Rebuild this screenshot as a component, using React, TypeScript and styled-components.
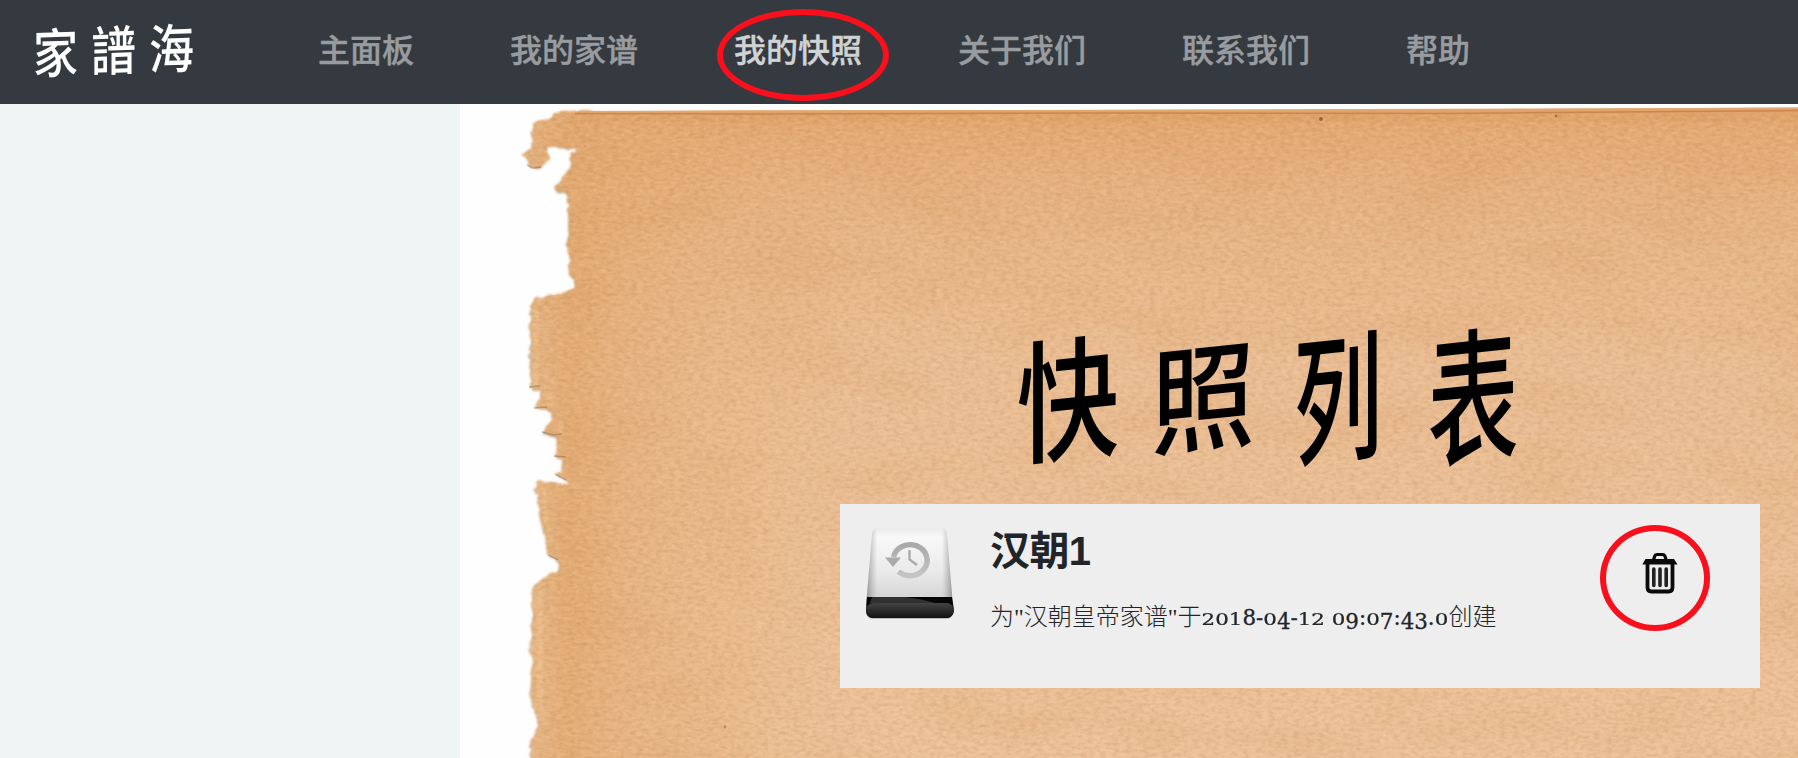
import React from "react";
import styled, { createGlobalStyle, css } from "styled-components";

const GlobalStyle = createGlobalStyle`
  *, *::before, *::after { box-sizing: border-box; }
  html, body, #root { height: 100%; }
  body {
    margin: 0;
    overflow: hidden;
    background: #fff;
    color: #212529;
    font-family: "Liberation Sans", "Noto Sans CJK SC", sans-serif;
  }
`;

const Page = styled.div`
  display: flex;
  flex-direction: column;
  height: 758px;
`;

const NavBar = styled.header`
  display: flex;
  align-items: center;
  flex: none;
  height: 104px;
  padding: 0 0 8px 33px;
  background: #343a40;
`;

const Logo = styled.div`
  width: 285px;
  font-family: "Noto Sans CJK TC", sans-serif;
  font-size: 45px;
  line-height: 60px;
  font-weight: 500;
  letter-spacing: 13px;
  color: #fff;
  white-space: nowrap;
  transform: translateY(-2px) skewY(-2deg) scaleY(1.18);
`;

const NavLinks = styled.nav`
  display: flex;
  gap: 96px;
`;

const NavLink = styled.a<{ $active?: boolean }>`
  position: relative;
  font-family: "Noto Sans CJK SC", sans-serif;
  font-size: 32px;
  line-height: 48px;
  font-weight: 500;
  white-space: nowrap;
  -webkit-text-stroke: 0.4px currentColor;
  color: ${(p) => (p.$active ? "#d0d2d3" : "#999c9f")};
`;

const Ring = styled.span<{ $w: number; $h: number; $x: number; $y: number }>`
  position: absolute;
  left: ${(p) => p.$x}px;
  top: ${(p) => p.$y}px;
  width: ${(p) => p.$w}px;
  height: ${(p) => p.$h}px;
  border: 6px solid #fa0f1c;
  border-radius: 50%;
`;

const Body = styled.div`
  display: flex;
  flex: 1;
  min-height: 0;
`;

const SideBar = styled.aside`
  flex: none;
  width: 460px;
  background: #eff4f5;
`;

const Scroll = styled.main`
  position: relative;
  flex: 1;
  overflow: hidden;
  padding: 212px 0 0 380px;
`;

const PaperArt = styled.svg`
  position: absolute;
  inset: 0;
  width: 1338px;
  height: 654px;
`;

const Title = styled.h1`
  position: relative;
  display: flex;
  gap: 29px;
  height: 150px;
  margin: 0 0 38px 175px;
  font-family: "Noto Sans CJK SC", sans-serif;
  font-size: 106px;
  line-height: 150px;
  font-weight: 500;
  color: #000;
`;

const Stroke = styled.span<{ $sx: number; $sy: number; $dy: number }>`
  transform: translateY(${(p) => p.$dy}px) skewY(-6deg) scale(${(p) => p.$sx}, ${(p) => p.$sy});
`;

const Card = styled.section`
  position: relative;
  display: flex;
  width: 920px;
  height: 184px;
  padding: 20px 0 0 22px;
  background: #eee;
`;

const Details = styled.div`
  flex: 1;
  padding-left: 34px;
`;

const Name = styled.h2`
  margin: -1px 0 0;
  font-size: 40px;
  line-height: 56px;
  font-weight: 700;
  letter-spacing: -0.6px;
  color: #212529;
`;

const Note = styled.p`
  display: flex;
  align-items: baseline;
  margin: 20px 0 0;
  font-family: "Liberation Serif", "Noto Sans CJK SC", serif;
  font-size: 24px;
  line-height: 36px;
  font-weight: 300;
  white-space: pre;
`;

const Stamp = styled.time`
  display: inline-block;
  width: 247px;
  font-family: "DejaVu Serif", serif;
  font-size: 21.4px;
  font-weight: 400;
  -webkit-text-stroke: 0.3px currentColor;
`;

type FigureKind = "small" | "low" | "tall";

const figureStyles = {
  small: css`
    display: inline-block;
    transform: scaleY(0.82);
    transform-origin: 50% 26.4px;
  `,
  low: css`
    position: relative;
    top: 4px;
  `,
  tall: css``,
};

const Figure = styled.span<{ $kind: FigureKind }>`
  ${(p) => figureStyles[p.$kind]}
`;

const DeleteButton = styled.button`
  position: relative;
  flex: none;
  align-self: flex-start;
  width: 38px;
  height: 44px;
  margin: 27px 81px 0 0;
  padding: 0;
  border: 0;
  background: none;
`;

const links = ["主面板", "我的家谱", "我的快照", "关于我们", "联系我们", "帮助"];

const titleChars = [
  { ch: "快", sx: 0.97, sy: 1.25, dy: 1 },
  { ch: "照", sx: 0.98, sy: 1.1, dy: 0 },
  { ch: "列", sx: 0.84, sy: 1.32, dy: -1 },
  { ch: "表", sx: 0.86, sy: 1.38, dy: -2 },
];

/* Text figures: 0-2 sit at x-height, 3, 4, 5, 7 and 9 hang below the baseline. */
const figureKind = (c: string): FigureKind =>
  "012".includes(c) ? "small" : "34579".includes(c) ? "low" : "tall";

function OldStyleFigures({ value }: { value: string }) {
  return (
    <Stamp>
      {Array.from(value).map((c, i) => (
        <Figure key={i} $kind={figureKind(c)}>{c}</Figure>
      ))}
    </Stamp>
  );
}

const sheet =
  "M556 111 L549 119 L534 122 L533 135 L532 147 L523 154 L529 161 L534 168 L543 168 L548 160 L548 148 L558 145 L568 149 L577 147 L571 156 L571 168 L565 174 L561 180 L556 186 L557 190 L566 193 L569 205 L569 230 L567 249 L571 260 L569 270 L574 280 L574 288 L562 294 L547 296 L534 299 L531 306 L531 387 L540 390 L540 400 L536 408 L548 409 L553 417 L543 432 L556 437 L559 445 L555 455 L563 460 L562 470 L556 474 L568 482 L568 485 L554 482 L537 481 L536 490 L539 500 L541 515 L546 535 L547 545 L550 555 L560 563 L559 570 L546 577 L537 582 L533 592 L533 620 L531 650 L533 665 L531 690 L533 705 L539 725 L536 733 L531 742 L531 752 L536 775 L1840 775 L1840 114 L600 114 L590 111 Z";

const topStrip = "M575 111.5 L760 110.5 L1100 110 L1500 109 L1798 107.5 V122 H575 Z";

function Paper() {
  return (
    <PaperArt viewBox="460 104 1338 654" aria-hidden="true">
      <defs>
        <linearGradient id="tone" gradientUnits="userSpaceOnUse" x1="0" y1="108" x2="0" y2="758">
          <stop offset="0" stopColor="#e0a36b" />
          <stop offset="0.04" stopColor="#e4aa75" />
          <stop offset="0.16" stopColor="#e6b484" />
          <stop offset="0.4" stopColor="#eabe95" />
          <stop offset="1" stopColor="#ecc29a" />
        </linearGradient>
        <linearGradient id="side" gradientUnits="userSpaceOnUse" x1="530" y1="0" x2="860" y2="0">
          <stop offset="0" stopColor="#e3b27e" stopOpacity="0.75" />
          <stop offset="0.12" stopColor="#e0a66c" stopOpacity="0.8" />
          <stop offset="0.3" stopColor="#e2a86d" stopOpacity="0.5" />
          <stop offset="1" stopColor="#e6b27d" stopOpacity="0" />
        </linearGradient>
        <filter id="rough" x="-5%" y="-5%" width="110%" height="110%">
          <feTurbulence type="fractalNoise" baseFrequency="0.13" numOctaves="3" seed="8" result="n" />
          <feDisplacementMap in="SourceGraphic" in2="n" scale="7" xChannelSelector="R" yChannelSelector="B" />
          <feGaussianBlur stdDeviation="0.8" />
        </filter>
        <filter id="grain" x="0" y="0" width="100%" height="100%" colorInterpolationFilters="sRGB">
          <feTurbulence type="fractalNoise" baseFrequency="0.16 0.28" numOctaves="3" seed="3" />
          <feColorMatrix type="matrix" values="0 0 0 0 0.62  0 0 0 0 0.38  0 0 0 0 0.18  0.36 0 0 0 -0.14" />
        </filter>
        <filter id="glint" x="0" y="0" width="100%" height="100%" colorInterpolationFilters="sRGB">
          <feTurbulence type="fractalNoise" baseFrequency="0.14 0.3" numOctaves="3" seed="21" />
          <feColorMatrix type="matrix" values="0 0 0 0 1  0 0 0 0 0.87  0 0 0 0 0.7  0.45 0 0 0 -0.16" />
        </filter>
        <filter id="blotch" x="0" y="0" width="100%" height="100%" colorInterpolationFilters="sRGB">
          <feTurbulence type="fractalNoise" baseFrequency="0.008 0.02" numOctaves="2" seed="5" />
          <feColorMatrix type="matrix" values="0 0 0 0 0.84  0 0 0 0 0.6  0 0 0 0 0.37  0.5 0 0 0 -0.22" />
        </filter>
        <clipPath id="cut"><path d={sheet} /></clipPath>
      </defs>
      <rect x="460" y="104" width="1338" height="654" fill="#fefefe" />
      <g filter="url(#rough)">
        <path d={sheet} fill="#b99a78" transform="translate(-0.8 1)" />
        <path d={sheet} fill="url(#tone)" />
        <path d={sheet} fill="url(#side)" />
        <path d="M536 310 V384 M548 392 L552 405 M560 420 L561 436 M544 490 L546 520 L552 545 M540 590 V720" fill="none" stroke="#efc592" strokeWidth="5" opacity="0.5" />
      </g>
      <path d={topStrip} fill="#e0a36b" />
      <g clipPath="url(#cut)">
        <rect x="500" y="104" width="1300" height="660" filter="url(#blotch)" />
        <rect x="500" y="104" width="1300" height="660" filter="url(#glint)" />
        <rect x="500" y="104" width="1300" height="660" filter="url(#grain)" />
      </g>
      <path d="M575 113.5 L760 114 L1100 113 L1450 113.5 L1798 110.5" fill="none" stroke="#c07a40" strokeWidth="1.5" opacity="0.7" />
      <path d="M580 111.8 L760 111 L1100 110.5 L1798 108.3" fill="none" stroke="#e3aa72" strokeWidth="1.4" />
      <path d="M529 387 L540 386 M534 408 L547 407 M542 432 L553 435 L562 434 M554 456 L566 457 M555 474 L566 480 M548 555 L558 560 M527 165 L533 168 L541 167" fill="none" stroke="#8b6e50" strokeWidth="1.3" opacity="0.5" />
      <circle cx="1321" cy="119" r="2" fill="#8d552b" opacity="0.8" />
      <circle cx="1556" cy="116" r="1.3" fill="#8d552b" opacity="0.7" />
      <circle cx="725" cy="727" r="1.4" fill="#a0663b" opacity="0.6" />
    </PaperArt>
  );
}

function DriveIcon() {
  return (
    <svg width="94" height="96" viewBox="862 524 94 96" aria-hidden="true">
      <defs>
        <linearGradient id="shell" x1="0" y1="0" x2="0" y2="1">
          <stop offset="0" stopColor="#f0f0f0" />
          <stop offset="0.12" stopColor="#ffffff" />
          <stop offset="0.55" stopColor="#f0f0f0" />
          <stop offset="1" stopColor="#d2d2d2" />
        </linearGradient>
        <linearGradient id="edges" x1="0" y1="0" x2="1" y2="0">
          <stop offset="0" stopColor="#777" stopOpacity="0.75" />
          <stop offset="0.13" stopColor="#aaa" stopOpacity="0.08" />
          <stop offset="0.87" stopColor="#aaa" stopOpacity="0.08" />
          <stop offset="1" stopColor="#777" stopOpacity="0.75" />
        </linearGradient>
        <linearGradient id="base" x1="0" y1="0" x2="0" y2="1">
          <stop offset="0" stopColor="#444" />
          <stop offset="0.6" stopColor="#262626" />
          <stop offset="1" stopColor="#111" />
        </linearGradient>
        <linearGradient id="dial" x1="0" y1="0" x2="0" y2="1">
          <stop offset="0" stopColor="#a9a9a9" />
          <stop offset="1" stopColor="#c4c4c4" />
        </linearGradient>
      </defs>
      <rect x="867" y="606" width="86" height="13" rx="6" fill="#bdbdbd" />
      <path d="M878 528 H941 Q946 528 947 534 L953 606 H866 L872 534 Q873 528 878 528 Z" fill="url(#shell)" />
      <path d="M878 528 H941 Q946 528 947 534 L953 606 H866 L872 534 Q873 528 878 528 Z" fill="url(#edges)" />
      <path d="M867 597 H952 L954 610 Q953 618 946 618 H873 Q866 618 866 610 Z" fill="#060606" />
      <rect x="866" y="603" width="88" height="15" rx="7.5" fill="url(#base)" />
      <path d="M872 597 H905 Q922 599 935 603 H870 Z" fill="#555" opacity="0.55" />
      <path d="M893.5 557 A17 15.5 0 1 1 898.5 571.5" fill="none" stroke="url(#dial)" strokeWidth="5.4" />
      <path d="M885 557.5 L901 557.5 L893 567 Z" fill="#aaa" />
      <path d="M909.5 550 V559.5 L917 565" fill="none" stroke="#aaa" strokeWidth="2.4" />
    </svg>
  );
}

function TrashIcon() {
  return (
    <svg width="38" height="44" viewBox="0 0 38 44" aria-hidden="true">
      <path d="M12.5 9 L13.8 4.8 Q14.4 3.5 16 3.5 H21.5 Q23.2 3.5 23.8 4.8 L25.2 9" fill="none" stroke="#0b0b0b" strokeWidth="3.2" />
      <path d="M4.5 8 H33 L36.5 13.6 H1.3 Z" fill="#0b0b0b" />
      <path d="M6.5 12 V36.5 Q6.5 40.5 10.5 40.5 H27.5 Q31.5 40.5 31.5 36.5 V12" fill="none" stroke="#0b0b0b" strokeWidth="3.8" />
      <path d="M12.8 18 V34.5 M19 18 V34.5 M25.2 18 V34.5" stroke="#222" strokeWidth="3.6" strokeLinecap="round" />
    </svg>
  );
}

export default function App() {
  return (
    <Page>
      <GlobalStyle />
      <NavBar>
        <Logo>家譜海</Logo>
        <NavLinks>
          {links.map((label) => {
            const active = label === "我的快照";
            return (
              <NavLink key={label} $active={active}>
                {label}
                {active && <Ring $x={-17} $y={-15} $w={172} $h={92} />}
              </NavLink>
            );
          })}
        </NavLinks>
      </NavBar>
      <Body>
        <SideBar />
        <Scroll>
          <Paper />
          <Title>
            {titleChars.map((t) => (
              <Stroke key={t.ch} $sx={t.sx} $sy={t.sy} $dy={t.dy}>{t.ch}</Stroke>
            ))}
          </Title>
          <Card>
            <DriveIcon />
            <Details>
              <Name>汉朝1</Name>
              <Note>
                <span>为"汉朝皇帝家谱"于</span>
                <OldStyleFigures value="2018-04-12 09:07:43.0" />
                <span>创建</span>
              </Note>
            </Details>
            <DeleteButton aria-label="delete">
              <TrashIcon />
              <Ring $x={-41} $y={-26} $w={110} $h={106} />
            </DeleteButton>
          </Card>
        </Scroll>
      </Body>
    </Page>
  );
}
